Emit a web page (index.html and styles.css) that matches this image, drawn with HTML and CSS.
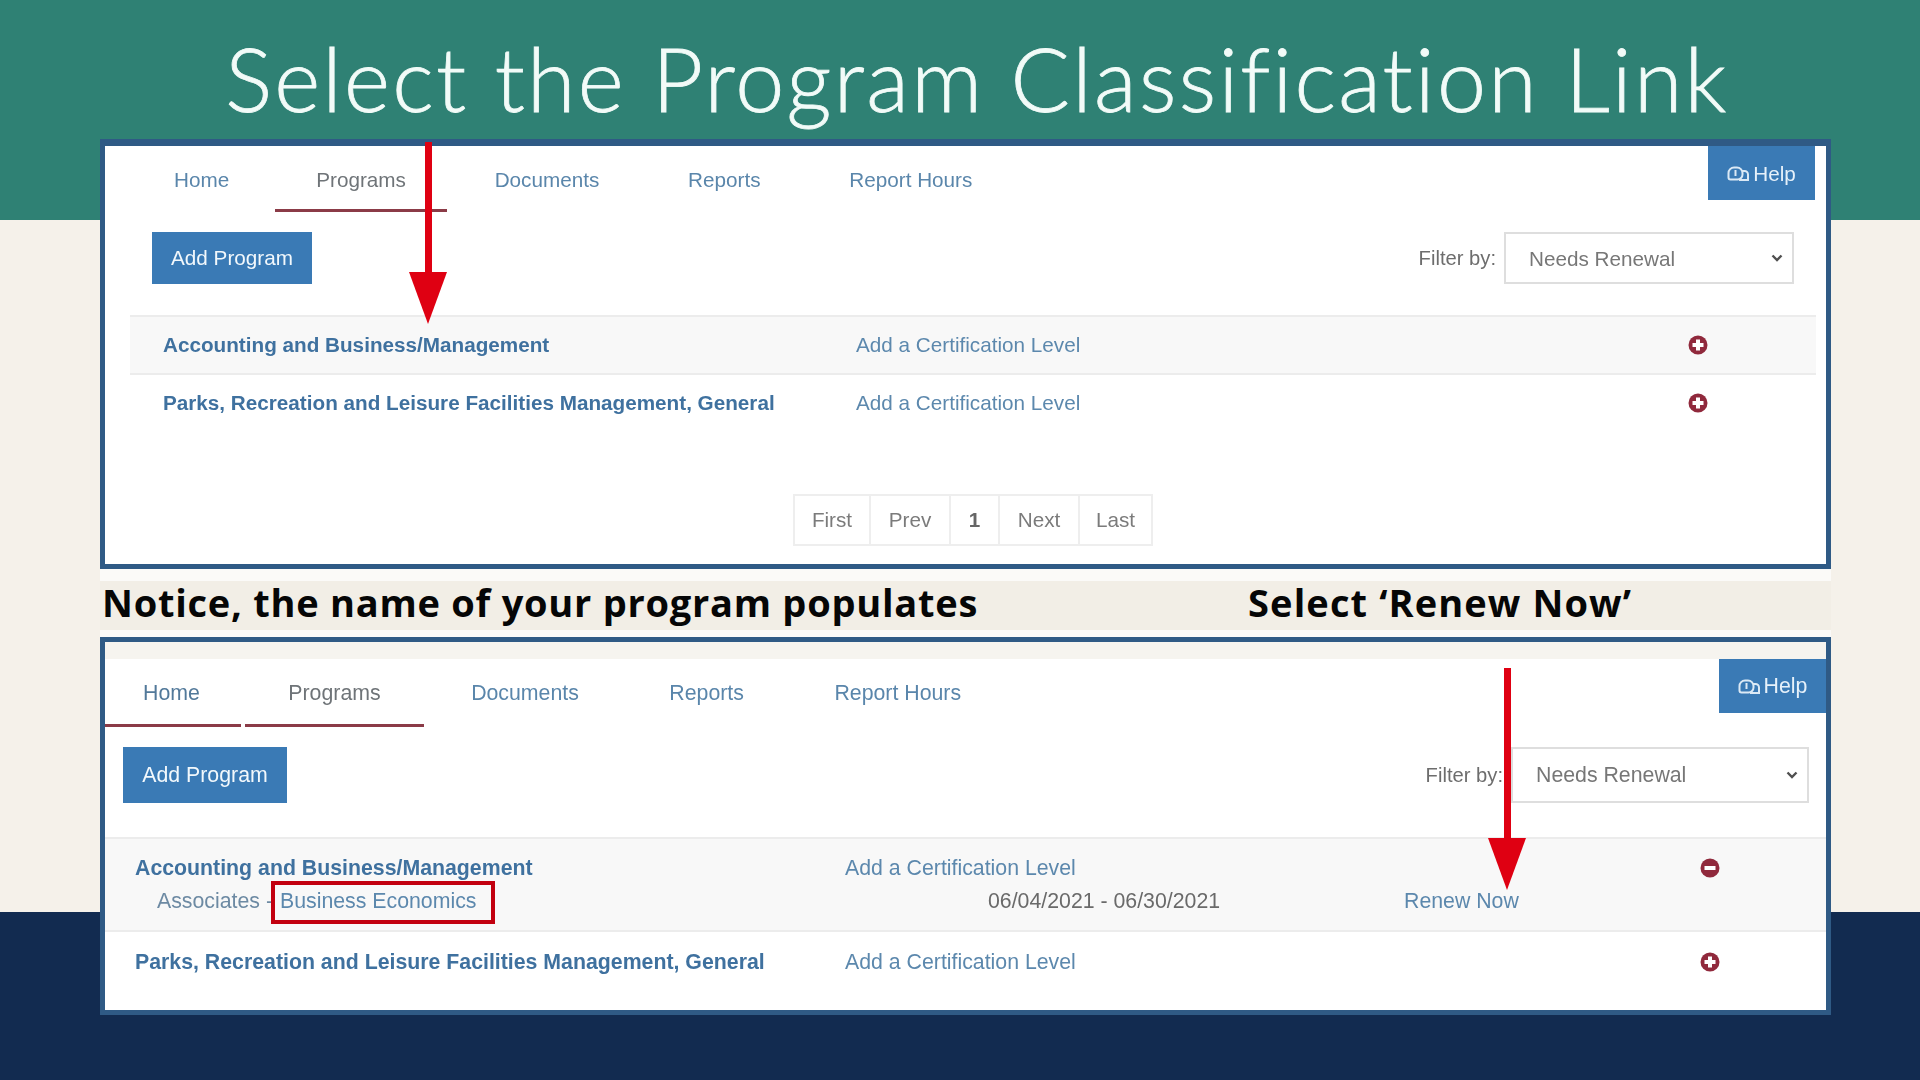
FILE: index.html
```html
<!DOCTYPE html>
<html lang="en">
<head>
  <meta charset="UTF-8" />
  <title>Select the Program Classification Link</title>
  <link rel="stylesheet" href="styles.css">
</head>
<body>
  <svg class="icon-defs" width="0" height="0">
    <symbol id="icon-plus" viewBox="0 0 20 20">
      <circle cx="10" cy="10" r="9.5" fill="#90293c" />
      <path d="M8 4.5h4V8h3.5v4H12v3.5H8V12H4.5V8H8z" fill="#fff" />
    </symbol>
    <symbol id="icon-minus" viewBox="0 0 20 20">
      <circle cx="10" cy="10" r="9.5" fill="#90293c" />
      <rect x="4.5" y="8" width="11" height="4" fill="#fff" />
    </symbol>
    <symbol id="icon-help" viewBox="0 0 22 16">
      <path d="M7 1.5h3a5.5 5.5 0 0 1 5.5 5.5v1.5a5 5 0 0 1-5 5H3.5A2 2 0 0 1 1.500 11.500V7A5.500 5.500 0 0 1 7 1.500z" fill="none" stroke="#dbe9f5" stroke-width="2" />
      <path d="M15 5h2.500a3.500 3.500 0 0 1 3.500 3.500V14h-9" fill="none" stroke="#dbe9f5" stroke-width="2" />
      <path d="M8.500 4v6" stroke="#dbe9f5" stroke-width="2" />
    </symbol>
  </svg>

  <h1 class="slide-title">Select the Program Classification Link</h1>

  <!-- Верхний снимок экрана -->
  <section class="panel panel-top">
    <div class="topbar">
      <nav class="tabs">
        <a class="tab">Home</a>
        <a class="tab tab-active">Programs</a>
        <a class="tab">Documents</a>
        <a class="tab">Reports</a>
        <a class="tab">Report Hours</a>
      </nav>
      <a class="help"><svg class="help-icon"><use href="#icon-help" /></svg>Help</a>
    </div>

    <div class="toolbar">
      <button class="add-btn">Add Program</button>
      <label class="filter">Filter by:
        <select class="filter-select"><option>Needs Renewal</option></select>
      </label>
    </div>

    <div class="programs">
      <div class="row row-shaded">
        <a class="program-name">Accounting and Business/Management</a>
        <a class="link cert-link">Add a Certification Level</a>
        <svg class="row-icon"><use href="#icon-plus" /></svg>
      </div>
      <div class="row">
        <a class="program-name">Parks, Recreation and Leisure Facilities Management, General</a>
        <a class="link cert-link">Add a Certification Level</a>
        <svg class="row-icon"><use href="#icon-plus" /></svg>
      </div>
    </div>

    <div class="pager">
      <a class="page page-first">First</a>
      <a class="page page-prev">Prev</a>
      <a class="page page-current">1</a>
      <a class="page page-next">Next</a>
      <a class="page page-last">Last</a>
    </div>

    <div class="arrow arrow-programs"></div>
  </section>

  <div class="captions">
    <span class="caption caption-left">Notice, the name of your program populates</span>
    <span class="caption caption-right">Select ‘Renew Now’</span>
  </div>

  <!-- Нижний снимок экрана -->
  <section class="panel panel-bottom">
    <div class="top-strip"></div>
    <div class="topbar">
      <nav class="tabs">
        <a class="tab tab-home">Home</a>
        <a class="tab tab-active">Programs</a>
        <a class="tab">Documents</a>
        <a class="tab">Reports</a>
        <a class="tab">Report Hours</a>
      </nav>
      <a class="help"><svg class="help-icon"><use href="#icon-help" /></svg>Help</a>
    </div>

    <div class="toolbar">
      <button class="add-btn">Add Program</button>
      <label class="filter">Filter by:
        <select class="filter-select"><option>Needs Renewal</option></select>
      </label>
    </div>

    <div class="programs">
      <div class="row row-shaded">
        <a class="program-name">Accounting and Business/Management</a>
        <a class="link cert-link">Add a Certification Level</a>
        <svg class="row-icon"><use href="#icon-minus" /></svg>
        <div class="classification">
          <span class="level">Associates -</span>
          <a class="link class-link">Business Economics</a>
        </div>
        <span class="dates">06/04/2021 - 06/30/2021</span>
        <a class="link renew">Renew Now</a>
      </div>
      <div class="row">
        <a class="program-name">Parks, Recreation and Leisure Facilities Management, General</a>
        <a class="link cert-link">Add a Certification Level</a>
        <svg class="row-icon"><use href="#icon-plus" /></svg>
      </div>
    </div>

    <div class="arrow arrow-renew"></div>
  </section>
</body>
</html>
```

FILE: styles.css
```css
* {
  box-sizing: border-box;
}

body {
  width: 1920px;
  height: 1080px;
  margin: 0;
  overflow: hidden;
  font-family: "Liberation Sans", Arial, sans-serif;
  background: linear-gradient(#2f8174 220px, #f5f1ea 220px, #f5f1ea 912px, #122b50 912px);
}

.icon-defs {
  position: absolute;
}

/* Заголовок слайда */
.slide-title {
  height: 139px;
  margin: 0;
  padding: 26px 0 0 34px;
  font-family: Lato, sans-serif;
  font-size: 88px;
  font-weight: 300;
  line-height: 104px;
  letter-spacing: 2.3px;
  text-align: center;
  color: #f2fbf8;
  -webkit-text-stroke: 0.8px #f2fbf8;
}

/* Снимки экрана */
.panel {
  position: relative;
  width: 1731px;
  margin-left: 100px;
  background: #fff;
  border: 5px solid #2f5a85;
  filter: blur(0.5px);
}

.panel-top {
  height: 430px;
  border-top-width: 7px;
  --font: 20.7px;
  --tab-pad: 41px;
  --tab-gap: 6.8px;
}

.panel-bottom {
  height: 378px;
  --font: 21.3px;
  --tab-pad: 43px;
  --tab-gap: 4.5px;
}

.top-strip {
  height: 17px;
  background: #f6f4ef;
}

.topbar {
  display: flex;
  justify-content: space-between;
  align-items: flex-start;
}

.tabs {
  display: flex;
}

.tab {
  padding: 20px var(--tab-pad) 15px;
  margin-right: var(--tab-gap);
  border-bottom: 3px solid transparent;
  font-size: var(--font);
  line-height: 28px;
  color: #5a86ab;
}

.tab-active {
  color: #6f7478;
  border-bottom-color: #8b3b47;
}

.tab-home {
  padding-left: 38px;
  padding-right: 41px;
  color: #52799a;
  border-bottom-color: #8b3b47;
}

.panel-top .tabs {
  padding-left: 28px;
}

.panel-top .tab:first-child {
  margin-right: 5px;
}

.panel-bottom .tab {
  padding-bottom: 17px;
}

.panel-top .help {
  margin-right: 11px;
}

.help {
  display: flex;
  align-items: center;
  justify-content: center;
  width: 107px;
  height: 54px;
  padding-top: 1px;
  background: #3a7ab5;
  font-size: var(--font);
  color: #e6f1fa;
}

.help-icon {
  width: 22px;
  height: 16px;
  margin-right: 4px;
}

.toolbar {
  display: flex;
  justify-content: space-between;
  align-items: center;
  margin: 20px 32px 31px 47px;
}

.panel-bottom .toolbar {
  margin: 20px 17px 34px 18px;
}

.add-btn {
  height: 52px;
  width: 160px;
  padding: 0;
  border: none;
  background: #3a7ab5;
  font: inherit;
  font-size: var(--font);
  color: #f2f8fc;
}

.panel-bottom .add-btn {
  height: 56px;
  width: 164px;
}

.filter {
  display: flex;
  align-items: center;
  gap: 8px;
  font-size: 20.2px;
  color: #6d6d6d;
}

.filter-select {
  width: 290px;
  height: 52px;
  padding: 0 23px;
  border: 2px solid #dedede;
  border-radius: 0;
  appearance: none;
  background: #fff url("data:image/svg+xml,%3Csvg xmlns='http://www.w3.org/2000/svg' viewBox='0 0 12 8'%3E%3Cpath d='M1.500 1.500 6 6l4.500-4.500' fill='none' stroke='%23505050' stroke-width='2.400'/%3E%3C/svg%3E") no-repeat right 9px center / 12px 8px;
  font: inherit;
  font-size: var(--font);
  color: #777;
}

.panel-bottom .filter-select {
  width: 298px;
  height: 56px;
}

/* Строки программ */
.programs {
  margin-left: 25px;
  margin-right: 10px;
}

.panel-bottom .programs {
  margin: 0;
}

.row {
  display: grid;
  grid-template-columns: 726px 832px 20px;
  align-items: center;
  height: 55px;
  font-size: var(--font);
  line-height: 28px;
}

.row-shaded {
  height: 60px;
  background: #f8f8f8;
  border-top: 2px solid #ececec;
  border-bottom: 2px solid #ececec;
}

.panel-bottom .row {
  grid-template-columns: 740px 143px 416px 296px 20px;
  height: 60px;
}

.panel-bottom .row-shaded {
  height: 95px;
  grid-template-rows: 33px 33px;
  align-content: center;
  padding-bottom: 1px;
}

.program-name {
  padding-left: 33px;
  font-weight: bold;
  color: #3f719f;
}

.panel-bottom .program-name {
  padding-left: 30px;
}

.link {
  color: #5c88ad;
}

.panel-bottom .cert-link {
  grid-column: 2 / 5;
}

.row-icon {
  width: 20px;
  height: 20px;
}

.panel-bottom .row-icon {
  grid-column: 5;
}

.classification {
  display: flex;
  gap: 7px;
  padding-left: 52px;
  grid-column: 1;
}

.level {
  color: #6d8aa3;
}

.dates {
  grid-column: 3;
  color: #6a6a6a;
}

.renew {
  grid-column: 4;
}

/* Постраничная навигация */
.pager {
  display: flex;
  justify-content: center;
  width: 360px;
  height: 52px;
  margin: 64px 0 0 688px;
  border: 2px solid #eeeeee;
}

.page {
  display: flex;
  align-items: center;
  justify-content: center;
  font-size: var(--font);
  color: #7b7b7b;
  border-left: 2px solid #eeeeee;
}

.page-first {
  width: 74px;
  border-left: none;
}

.page-prev {
  width: 80px;
}

.page-current {
  width: 49px;
  font-weight: bold;
  color: #666;
}

.page-next {
  width: 80px;
}

.page-last {
  width: 73px;
}

/* Красный контур вокруг Business Economics и стрелки лежат поверх снимка */
.class-link {
  position: relative;
  color: #5c88ad;
}

.class-link::after {
  content: "";
  position: absolute;
  left: -9px;
  right: -18px;
  top: -6px;
  bottom: -9px;
  border: 4px solid #c2000f;
}

.arrow {
  position: absolute;
  width: 38px;
}

.arrow::before {
  content: "";
  display: block;
  width: 7px;
  height: calc(100% - 52px);
  margin: 0 auto;
  background: #df0012;
}

.arrow::after {
  content: "";
  display: block;
  width: 38px;
  height: 52px;
  background: #df0012;
  clip-path: polygon(0 0, 100% 0, 50% 100%);
}

.arrow-programs {
  left: 304px;
  top: -4px;
  height: 182px;
}

.arrow-renew {
  left: 1383px;
  top: 26px;
  height: 222px;
}

/* Подписи между снимками */
.captions {
  display: flex;
  align-items: center;
  width: 1731px;
  height: 68px;
  margin-left: 100px;
  padding-bottom: 3px;
  background: linear-gradient(#fbfaf8 12px, #f2eee6 12px, #f2eee6 61px, #fbfaf8 61px);
  font-family: "Open Sans", sans-serif;
  font-weight: 700;
  font-size: 38px;
  letter-spacing: 0.75px;
  color: #060606;
}

.caption-left {
  margin-left: 2px;
}

.caption-right {
  margin-left: 270px;
  letter-spacing: 1.1px;
}
```
